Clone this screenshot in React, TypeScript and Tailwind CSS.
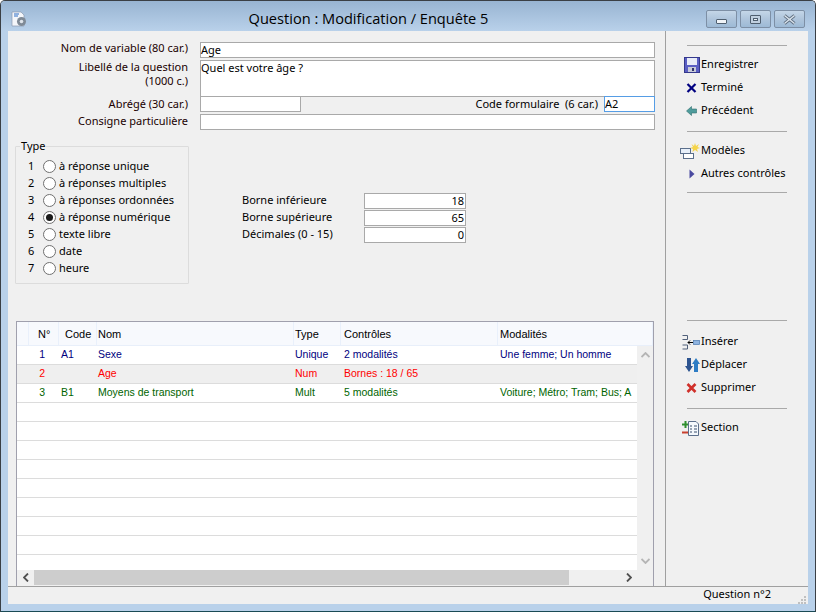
import React from "react";

const types = [
  { n: 1, label: "à réponse unique" },
  { n: 2, label: "à réponses multiples" },
  { n: 3, label: "à réponses ordonnées" },
  { n: 4, label: "à réponse numérique", checked: true },
  { n: 5, label: "texte libre" },
  { n: 6, label: "date" },
  { n: 7, label: "heure" },
];

const bounds = [
  { label: "Borne inférieure", value: "18" },
  { label: "Borne supérieure", value: "65" },
  { label: "Décimales (0 - 15)", value: "0" },
];

const rows = [
  { n: "1", code: "A1", nom: "Sexe", type: "Unique", ctrl: "2 modalités", mod: "Une femme; Un homme", color: "text-[#000080]", bg: "bg-white" },
  { n: "2", code: "", nom: "Age", type: "Num", ctrl: "Bornes : 18 / 65", mod: "", color: "text-[#ff0000]", bg: "bg-[#efefef]" },
  { n: "3", code: "B1", nom: "Moyens de transport", type: "Mult", ctrl: "5 modalités", mod: "Voiture; Métro; Tram; Bus; A", color: "text-[#006400]", bg: "bg-white" },
  ...Array.from({ length: 9 }, () => ({ n: "", code: "", nom: "", type: "", ctrl: "", mod: "", color: "", bg: "bg-white" })),
];

const Sep = ({ className }: { className: string }) => (
  <div className={`mx-[21px] h-px bg-[#a9a9a9] ${className}`} />
);

const SaveIcon = () => (
  <svg width="16" height="16" viewBox="0 0 16 16">
    <rect x="0.5" y="0.5" width="15" height="15" fill="#5b5fc4" stroke="#34388c" />
    <rect x="3" y="1" width="10" height="7" fill="#e8ecf8" />
    <rect x="4" y="10" width="8" height="5" fill="#c8cbd8" />
    <rect x="8" y="11" width="2" height="3" fill="#30336a" />
  </svg>
);
const CrossIcon = ({ color, size = 2.2 }: { color: string; size?: number }) => (
  <svg width="16" height="16" viewBox="0 0 16 16">
    <path d="M3.500 4 11.500 12M11.500 4 3.500 12" stroke={color} strokeWidth={size} fill="none" />
  </svg>
);
const BackIcon = () => (
  <svg width="16" height="16" viewBox="0 0 16 16">
    <path d="M2.500 8 7.500 3.500V6H12.500V10H7.500V12.500Z" fill="#4f9c9c" stroke="#2f6f6f" strokeWidth="0.6" />
  </svg>
);
const ModelsIcon = () => (
  <svg width="20" height="16" viewBox="0 0 20 16">
    <rect x="0.5" y="5.500" width="10" height="5" fill="#e8f0fa" stroke="#5b6f8c" />
    <rect x="3.500" y="10.500" width="10" height="5" fill="#ffffff" stroke="#5b6f8c" />
    <path d="M15 0 16 3 19 1 17.500 4 20 5 17 6 18 9 15 7 12.500 9 13 6 10 5 13 4 11.500 1 14 3Z" fill="#f5d44a" />
  </svg>
);
const PlayIcon = () => (
  <svg width="16" height="16" viewBox="0 0 16 16">
    <path d="M5.500 3.500 10.500 8 5.500 12.500Z" fill="#4a4aa0" />
  </svg>
);
const InsertIcon = () => (
  <svg width="18" height="16" viewBox="0 0 18 16">
    <path d="M0.500 1.500H5.500V5.500H0.500M0.500 11H5.500V15H0.500" stroke="#50607a" fill="none" />
    <path d="M6 8.500H11M8 6.500 6 8.500 8 10.500" stroke="#000" fill="none" />
    <rect x="11.500" y="6.500" width="6" height="4" fill="#8fb4e0" stroke="#4a78b0" strokeWidth="0.7" />
  </svg>
);
const MoveIcon = () => (
  <svg width="16" height="16" viewBox="0 0 16 16">
    <path d="M3 1H7V9H9L5 15 1 9H3Z" fill="#2d5490" />
    <path d="M10 15V7H8L12 1 16 7H14V15Z" fill="#2d7cc4" />
  </svg>
);
const SectionIcon = () => (
  <svg width="18" height="16" viewBox="0 0 18 16">
    <path d="M3.500 1V8M0 4.500H7" stroke="#2f8f2f" strokeWidth="2" fill="none" />
    <path d="M0 12.500H7" stroke="#c8402f" strokeWidth="2" fill="none" />
    <path d="M6.500 1.500H14L16.500 4V15.500H6.500Z" fill="#f4f8fc" stroke="#5b6f8c" />
    <path d="M8 6H10M12 6H15M8 9H10M12 9H15M8 12H10M12 12H15" stroke="#3b4f6c" fill="none" />
  </svg>
);

const actions: { label: string; icon: React.ReactNode }[][] = [
  [
    { label: "Enregistrer", icon: <SaveIcon /> },
    { label: "Terminé", icon: <CrossIcon color="#000080" /> },
    { label: "Précédent", icon: <BackIcon /> },
  ],
  [
    { label: "Modèles", icon: <ModelsIcon /> },
    { label: "Autres contrôles", icon: <PlayIcon /> },
  ],
  [
    { label: "Insérer", icon: <InsertIcon /> },
    { label: "Déplacer", icon: <MoveIcon /> },
    { label: "Supprimer", icon: <CrossIcon color="#d0302a" size={2.6} /> },
  ],
  [{ label: "Section", icon: <SectionIcon /> }],
];

const ActionGroup = ({ items }: { items: typeof actions[number] }) => (
  <div className="flex flex-col">
    {items.map((a) => (
      <div key={a.label} className="flex h-[23px] items-center">
        <div className="flex w-[35px] justify-end pr-[1px]">{a.icon}</div>
        <span className="text-black">{a.label}</span>
      </div>
    ))}
  </div>
);

const WinButton = ({ children }: { children: React.ReactNode }) => (
  <div className="flex h-[18px] w-[31px] items-center justify-center rounded-[2px] border border-[#7d8fa5] bg-gradient-to-b from-[#c4d6e8] via-[#afc5dc] to-[#9dbad6]">
    {children}
  </div>
);

const Field = ({ className, children }: { className: string; children?: React.ReactNode }) => (
  <div className={`border border-[#a9a9a9] bg-white leading-[14px] text-black ${className}`}>{children}</div>
);

const colClass = "flex items-center overflow-hidden whitespace-nowrap";
const headClass = "border-r border-[#e9f0fb] leading-[24px]";
const labelClass = "w-[180px] text-right leading-[14px] text-[#200000]";

export default function App() {
  return (
    <div
      className="flex h-[612px] w-[816px] flex-col overflow-hidden rounded-t-[5px] border-x border-t border-x-[#3a3f45] border-t-[#3a3f45] border-b border-b-[#1a4a55] bg-[#b9d1ea] text-[11px]"
      style={{ fontFamily: '"Noto Sans", sans-serif' }}
    >
      {/* Title bar */}
      <div className="flex h-[30px] shrink-0 items-center bg-gradient-to-b from-[#98b4d2] to-[#b9d1ea] pl-[10px] pr-[10px] pt-[6px]">
        <svg width="16" height="16" viewBox="0 0 16 16">
          <path d="M1 1H10L13 4V15H1Z" fill="#f4f6fa" stroke="#8a9ab0" strokeWidth="0.7" />
          <path d="M3 3H8M3 5H7" stroke="#2d6cc4" strokeWidth="1.2" />
          <circle cx="10.500" cy="10.500" r="4.500" fill="#7f8a96" />
          <circle cx="10.500" cy="10.500" r="1.800" fill="#dfe4ea" />
        </svg>
        <div className="flex-1 pl-[4px] text-center text-[14.6px] text-black" style={{ fontFamily: '"Open Sans", sans-serif' }}>
          Question : Modification / Enquête 5
        </div>
        <div className="flex items-center gap-[3px]">
          <WinButton>
            <div className="mt-[4px] h-[5px] w-[11px] rounded-[1px] border border-[#4f5f70] bg-[#f0f4f8]" />
          </WinButton>
          <WinButton>
            <div className="flex h-[9px] w-[11px] items-center justify-center rounded-[1px] border border-[#4f5f70] bg-[#c0d0e0]">
              <div className="h-[3px] w-[5px] border border-[#4f5f70] bg-[#e8eef4]" />
            </div>
          </WinButton>
          <WinButton>
            <svg width="13" height="11" viewBox="0 0 13 11">
              <path d="M1.500 1.500 6.500 5.500 11.500 1.500M1.500 9.500 6.500 5.500 11.500 9.500" stroke="#5f6f80" strokeWidth="3.200" fill="none" />
              <path d="M1.500 1.500 6.500 5.500 11.500 1.500M1.500 9.500 6.500 5.500 11.500 9.500" stroke="#d8e2ec" strokeWidth="1.400" fill="none" />
            </svg>
          </WinButton>
        </div>
      </div>

      {/* Client area */}
      <div className="mx-[7px] flex min-h-0 flex-1 flex-col bg-[#f0f0f0] text-black">
        <div className="flex min-h-0 flex-1">
          {/* Left panel */}
          <div className="flex w-[658px] shrink-0 flex-col border-r border-[#a0a0a0]">
            <div className="flex flex-col pt-[11px]">
              <div className="flex h-[18px] items-start">
                <div className={`${labelClass} -mt-[1px]`}>Nom de variable (80 car.)</div>
                <Field className="ml-[12px] h-[16px] w-[455px]">Age</Field>
              </div>
              <div className="flex h-[36px] items-start">
                <div className={labelClass}>
                  Libellé de la question
                  <br />
                  (1000 c.)
                </div>
                <Field className="ml-[12px] h-[37px] w-[455px]">Quel est votre âge ?</Field>
              </div>
              <div className="flex h-[18px] items-start">
                <div className={`${labelClass} mt-[1px]`}>Abrégé (30 car.)</div>
                <Field className="ml-[12px] h-[16px] w-[101px]" />
                <div className="ml-auto mr-[6px] whitespace-pre leading-[16px]">Code formulaire  (6 car.)</div>
                <div className="mr-[10px] h-[16px] w-[51px] border border-[#569de5] bg-white leading-[14px]">A2</div>
              </div>
              <div className="flex h-[17px] items-start">
                <div className={labelClass}>Consigne particulière</div>
                <Field className="ml-[12px] h-[16px] w-[455px]" />
              </div>
            </div>

            <div className="mt-[9px] flex items-start pl-[7px]">
              <fieldset className="h-[144px] w-[174px] rounded-[1px] border border-[#dcdcdc] pl-[9px] pt-[6px]">
                <legend className="-ml-[5px] px-[1px] leading-[12px]">Type</legend>
                {types.map((t) => (
                  <div key={t.n} className="flex h-[17px] items-center">
                    <span className="w-[18px] pl-[3px]">{t.n}</span>
                    <span className="flex h-[13px] w-[13px] items-center justify-center rounded-full border border-[#707070] bg-white">
                      {t.checked && <span className="h-[7px] w-[7px] rounded-full bg-[#1a1a1a]" />}
                    </span>
                    <span className="ml-[3px] whitespace-nowrap">{t.label}</span>
                  </div>
                ))}
              </fieldset>
              <div className="ml-[53px] mt-[52px] flex flex-col">
                {bounds.map((b) => (
                  <div key={b.label} className="flex h-[17px] items-center">
                    <span className="w-[122px]">{b.label}</span>
                    <Field className="h-[16px] w-[102px] pr-[1px] text-right">{b.value}</Field>
                  </div>
                ))}
              </div>
            </div>

            {/* Table */}
            <div
              className="ml-[8px] mr-[11px] mt-auto flex h-[265px] flex-col border-x border-t border-[#a0a0ad] pb-[1px]"
              style={{ fontFamily: '"Liberation Sans", sans-serif' }}
            >
              <div className="flex h-[24px] shrink-0 border-b border-[#e8effa] bg-[#f7f9fd]">
                <div className="w-[12px] border-r border-[#e9f0fb]" />
                <div className={`${headClass} w-[30px] pl-[9px]`}>N°</div>
                <div className={`${headClass} w-[38px] pl-[6px]`}>Code</div>
                <div className={`${headClass} w-[197px] pl-[1px]`}>Nom</div>
                <div className={`${headClass} w-[47px] pl-[1px]`}>Type</div>
                <div className={`${headClass} w-[157px] pl-[3px]`}>Contrôles</div>
                <div className={`${headClass} flex-1 pl-[2px]`}>Modalités</div>
              </div>
              <div className="flex min-h-0 flex-1">
                <div className="min-w-0 flex-1 overflow-hidden bg-white text-[10.5px]">
                  {rows.map((r, i) => (
                    <div key={i} className={`flex h-[19px] border-b border-[#dcdcdc] ${r.bg} ${r.color}`}>
                      <div className={`${colClass} w-[29px] justify-end pr-[1px]`}>{r.n}</div>
                      <div className={`${colClass} w-[51px] pl-[15px]`}>{r.code}</div>
                      <div className={`${colClass} w-[197px] pl-[1px]`}>{r.nom}</div>
                      <div className={`${colClass} w-[47px] pl-[1px]`}>{r.type}</div>
                      <div className={`${colClass} w-[157px] pl-[3px]`}>{r.ctrl}</div>
                      <div className={`${colClass} min-w-0 flex-1 pl-[2px]`}>{r.mod}</div>
                    </div>
                  ))}
                </div>
                <div className="flex w-[16px] shrink-0 flex-col items-center justify-between bg-[#f0f0f0] py-[6px]">
                  <svg width="9" height="6" viewBox="0 0 9 6"><path d="M0.500 5 4.500 1 8.500 5" stroke="#b5b5b5" strokeWidth="1.800" fill="none" /></svg>
                  <svg width="9" height="6" viewBox="0 0 9 6"><path d="M0.500 1 4.500 5 8.500 1" stroke="#b5b5b5" strokeWidth="1.800" fill="none" /></svg>
                </div>
              </div>
              <div className="flex h-[15px] shrink-0 items-center bg-[#f0f0f0]">
                <div className="flex w-[17px] justify-center">
                  <svg width="6" height="9" viewBox="0 0 6 9"><path d="M5 0.500 1 4.500 5 8.500" stroke="#505050" strokeWidth="1.800" fill="none" /></svg>
                </div>
                <div className="h-full w-[535px] bg-[#cdcdcd]" />
                <div className="flex flex-1 justify-end pr-[21px]">
                  <svg width="6" height="9" viewBox="0 0 6 9"><path d="M1 0.500 5 4.500 1 8.500" stroke="#505050" strokeWidth="1.800" fill="none" /></svg>
                </div>
              </div>
            </div>
          </div>

          {/* Right panel */}
          <div className="flex flex-1 flex-col pt-[14px]">
            <Sep className="" />
            <div className="mt-[7px]"><ActionGroup items={actions[0]} /></div>
            <Sep className="mt-[9px]" />
            <div className="mt-[7px]"><ActionGroup items={actions[1]} /></div>
            <Sep className="mt-[7px]" />
            <Sep className="mt-[127px]" />
            <div className="mt-[9px]"><ActionGroup items={actions[2]} /></div>
            <Sep className="mt-[9px]" />
            <div className="mt-[7px]"><ActionGroup items={actions[3]} /></div>
          </div>
        </div>

        {/* Status bar */}
        <div className="flex h-[18px] shrink-0 items-center justify-end border-t border-[#a0a0a0] pr-[2px]">
          <span className="mb-[2px] mr-[26px]">Question n°2</span>
          <svg width="9" height="9" viewBox="0 0 9 9" className="mt-[7px]">
            <path d="M7 1h2v2H7zM4 4h2v2H4zM7 4h2v2H7zM1 7h2v2H1zM4 7h2v2H4zM7 7h2v2H7z" fill="#c0c0c0" />
          </svg>
        </div>
      </div>
      <div className="h-[7px] shrink-0" />
    </div>
  );
}
